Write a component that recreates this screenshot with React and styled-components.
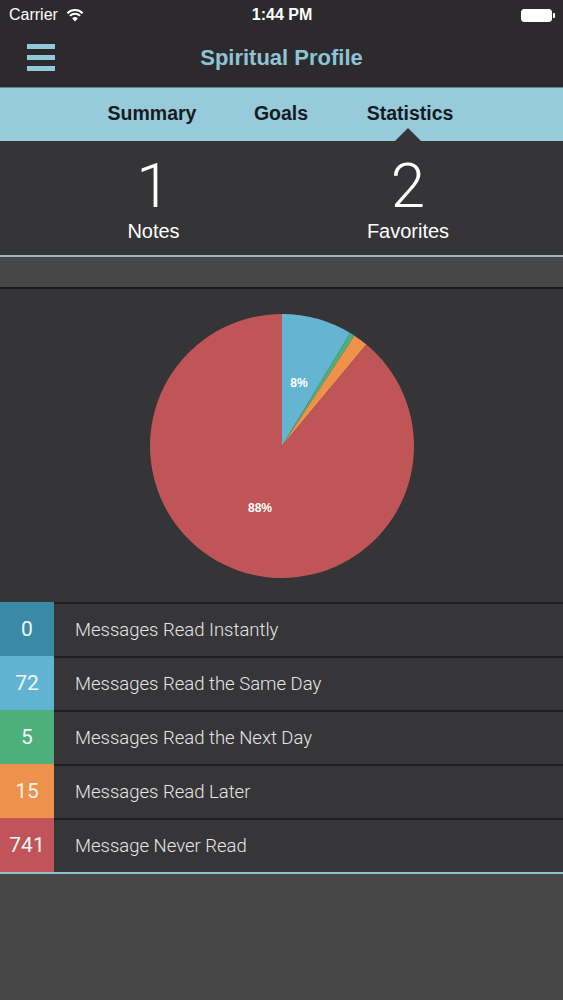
import React from "react";
import styled, { createGlobalStyle } from "styled-components";

const Global = createGlobalStyle`
  html, body { margin: 0; padding: 0; background: #474747; }
  body { font-family: "Helvetica Neue", "Liberation Sans", Arial, sans-serif; -webkit-font-smoothing: antialiased; }
  * { box-sizing: border-box; }
`;

const Screen = styled.div`
  width: 563px;
  min-height: 1000px;
  background: #474747;
  display: flex;
  flex-direction: column;
`;

const Top = styled.div`
  background: #2c2a2c;
`;

const StatusBar = styled.div`
  height: 30px;
  display: grid;
  grid-template-columns: 1fr auto 1fr;
  align-items: center;
  padding: 0 8px 0 9px;
  color: #fff;
  font-size: 16px;
`;

const StatusLeft = styled.div`
  display: flex;
  align-items: center;
  gap: 8px;
`;

const StatusTime = styled.div`
  font-weight: 600;
  font-size: 16px;
`;

const StatusRight = styled.div`
  display: flex;
  justify-content: flex-end;
  align-items: center;
`;

const Battery = styled.div`
  width: 31px;
  height: 13px;
  border: 1px solid #fff;
  border-radius: 3px;
  background: #fff;
  position: relative;
  margin-right: 3px;
  &::after {
    content: "";
    position: absolute;
    right: -4px;
    top: 3px;
    width: 2px;
    height: 5px;
    background: #fff;
    border-radius: 0 1px 1px 0;
  }
`;

const NavBar = styled.div`
  height: 57px;
  display: grid;
  grid-template-columns: 80px 1fr 80px;
  align-items: center;
`;

const Burger = styled.div`
  display: flex;
  flex-direction: column;
  gap: 6px;
  padding-left: 27px;
  margin-top: -2px;
`;

const BurgerBar = styled.span`
  display: block;
  width: 28px;
  height: 5px;
  background: #93cadb;
`;

const Title = styled.div`
  text-align: center;
  color: #8ec5d6;
  font-size: 22px;
  font-weight: 600;
  margin-top: -1px;
`;

const Tabs = styled.div`
  height: 54px;
  background: #97cbdc;
  border-top: 1px solid #5d8594;
  display: grid;
  grid-template-columns: 75px 154px 104px 154px 76px;
  align-items: center;
`;

const Tab = styled.div`
  grid-column: ${(p) => p.col};
  position: relative;
  height: 100%;
  display: flex;
  align-items: center;
  justify-content: center;
  font-size: 19.5px;
  font-weight: 600;
  color: #151b22;
  padding-bottom: 2px;
  ${(p) =>
    p.active &&
    `
    &::after {
      content: "";
      position: absolute;
      bottom: 0;
      left: 50%;
      margin-left: -15px;
      width: 0;
      height: 0;
      border-left: 13px solid transparent;
      border-right: 13px solid transparent;
      border-bottom: 13px solid #353436;
    }
  `}
`;

const Counts = styled.div`
  height: 114px;
  background: #353436;
  display: grid;
  grid-template-columns: 307px 202px;
  padding-bottom: 4px;
`;

const Count = styled.div`
  display: flex;
  flex-direction: column;
  align-items: center;
  justify-content: flex-end;
  color: #fff;
`;

const CountNum = styled.div`
  font-size: 62px;
  font-weight: 300;
  line-height: 62px;
  font-family: "Helvetica Neue", Roboto, "Liberation Sans", sans-serif;
`;

const CountLabel = styled.div`
  font-size: 20px;
  font-weight: 400;
  margin-top: 3px;
  margin-bottom: 8px;
`;

const Rule = styled.div`
  height: ${(p) => p.h}px;
  background: ${(p) => p.c};
`;

const Band = styled.div`
  height: 30px;
  background: #474747;
`;

const ChartArea = styled.div`
  height: 313px;
  background: #353436;
  display: flex;
  align-items: center;
  justify-content: center;
  padding-top: 1px;
`;

const List = styled.div`
  background: #363537;
`;

const Row = styled.div`
  display: flex;
  height: 54px;
`;

const CountBox = styled.div`
  width: 54px;
  flex: none;
  background: ${(p) => p.c};
  color: #f4f4f4;
  display: flex;
  align-items: center;
  justify-content: center;
  font-size: 21px;
  font-family: "Helvetica Neue", Roboto, "Liberation Sans", sans-serif;
  font-weight: 400;
`;

const RowLabel = styled.div`
  flex: 1;
  border-top: 2px solid #1e1d1f;
  display: flex;
  align-items: center;
  padding-left: 21px;
  padding-bottom: 1px;
  color: #e6e6e6;
  font-size: 18.5px;
  font-family: "Helvetica Neue", Roboto, "Liberation Sans", sans-serif;
  font-weight: 300;
`;

const Wifi = () => (
  <svg width="18" height="14" viewBox="0 0 18 14">
    <path d="M9 13.5 L6.2 10.4 A4 4 0 0 1 11.8 10.4 Z" fill="#fff" />
    <path d="M3.9 7.9 A7.3 7.3 0 0 1 14.1 7.9" stroke="#fff" strokeWidth="2" fill="none" />
    <path d="M1.4 5.2 A10.8 10.8 0 0 1 16.6 5.2" stroke="#fff" strokeWidth="2" fill="none" />
  </svg>
);

const data = [
  { n: 0, label: "Messages Read Instantly", c: "#3a8aa6" },
  { n: 72, label: "Messages Read the Same Day", c: "#61b4d1" },
  { n: 5, label: "Messages Read the Next Day", c: "#4daf7b" },
  { n: 15, label: "Messages Read Later", c: "#ee914b" },
  { n: 741, label: "Message Never Read", c: "#c0545a" },
];

const pieColors = ["#3a8aa6", "#64b5d2", "#4daf7b", "#ee914b", "#bf5557"];

const Pie = () => {
  const total = data.reduce((s, d) => s + d.n, 0);
  const cx = 140, cy = 140, r = 132;
  let a0 = 0;
  const slices = [];
  data.forEach((d, i) => {
    if (!d.n) return;
    const a1 = a0 + (d.n / total) * Math.PI * 2;
    const p = (a) => [cx + r * Math.sin(a), cy - r * Math.cos(a)];
    const [x0, y0] = p(a0);
    const [x1, y1] = p(a1);
    const large = a1 - a0 > Math.PI ? 1 : 0;
    slices.push(
      <path
        key={i}
        d={`M${cx} ${cy} L${x0} ${y0} A${r} ${r} 0 ${large} 1 ${x1} ${y1} Z`}
        fill={pieColors[i]}
      />
    );
    a0 = a1;
  });
  return (
    <svg width="280" height="280" viewBox="0 0 280 280">
      {slices}
      <text x="157" y="81" fill="#fff" fontSize="12" fontWeight="600" textAnchor="middle" fontFamily="Liberation Sans, Arial, sans-serif">8%</text>
      <text x="118" y="206" fill="#fff" fontSize="12" fontWeight="600" textAnchor="middle" fontFamily="Liberation Sans, Arial, sans-serif">88%</text>
    </svg>
  );
};

export default function App() {
  return (
    <Screen>
      <Global />
      <Top>
        <StatusBar>
          <StatusLeft>
            Carrier <Wifi />
          </StatusLeft>
          <StatusTime>1:44 PM</StatusTime>
          <StatusRight>
            <Battery />
          </StatusRight>
        </StatusBar>
        <NavBar>
          <Burger>
            <BurgerBar />
            <BurgerBar />
            <BurgerBar />
          </Burger>
          <Title>Spiritual Profile</Title>
          <div />
        </NavBar>
      </Top>
      <Tabs>
        <Tab col={2}>Summary</Tab>
        <Tab col={3}>Goals</Tab>
        <Tab col={4} active>Statistics</Tab>
      </Tabs>
      <Counts>
        <Count>
          <CountNum>1</CountNum>
          <CountLabel>Notes</CountLabel>
        </Count>
        <Count>
          <CountNum>2</CountNum>
          <CountLabel>Favorites</CountLabel>
        </Count>
      </Counts>
      <Rule h={2} c="#9db7bf" />
      <Band />
      <Rule h={2} c="#1c1c1d" />
      <ChartArea>
        <Pie />
      </ChartArea>
      <List>
        {data.map((d) => (
          <Row key={d.label}>
            <CountBox c={d.c}>{d.n}</CountBox>
            <RowLabel>{d.label}</RowLabel>
          </Row>
        ))}
      </List>
      <Rule h={2} c="#8fc0cf" />
    </Screen>
  );
}
